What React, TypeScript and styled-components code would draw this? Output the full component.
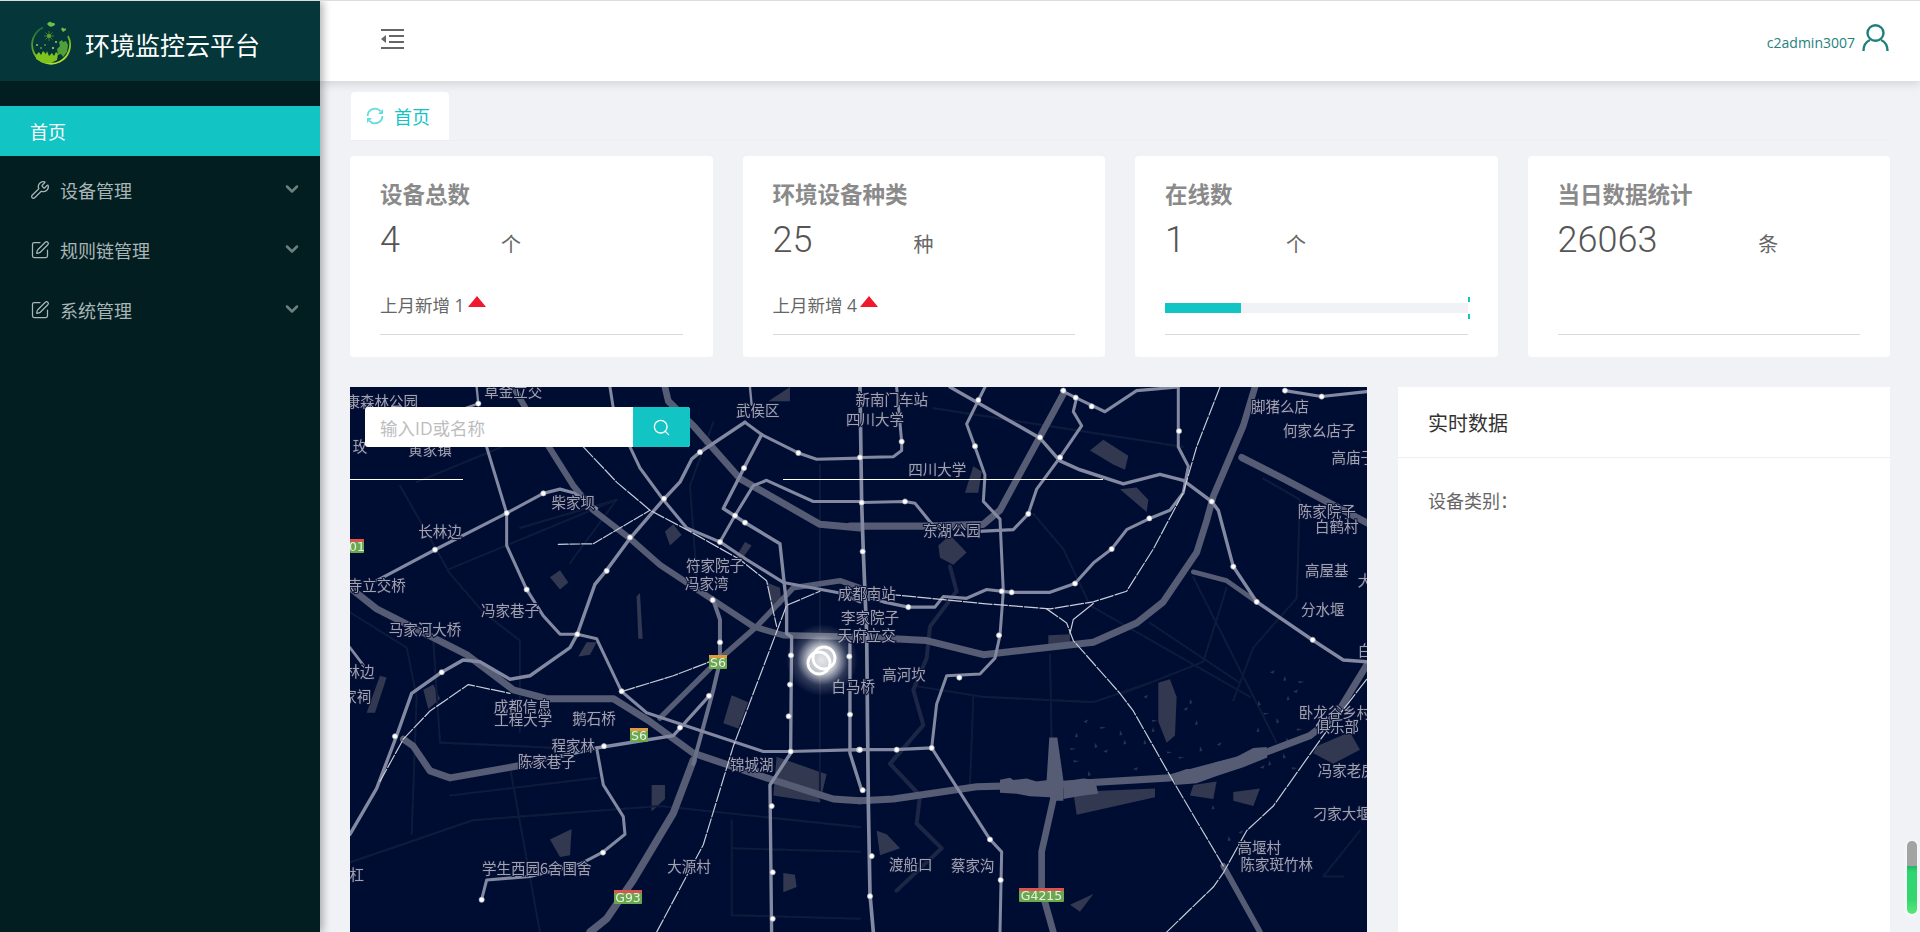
import * as React from 'react';
import styled, { createGlobalStyle } from 'styled-components';
import { ChevronDown, Search, SquarePen, Wrench } from 'lucide-react';

const GlobalStyle = createGlobalStyle`
    html, body {
        margin: 0;
        height: 932px;
        overflow: hidden;
        background: #f0f2f5;
        font-family: "Open Sans", "Noto Sans CJK SC", sans-serif;
    }
    * { box-sizing: border-box; }
`;

const Page = styled.div`
    display: flex;
    height: 932px;
    border-top: 1px solid #dcdcdc;
    overflow: hidden;
`;

const Sidebar = styled.aside`
    width: 320px;
    flex-shrink: 0;
    background: #031e21;
    box-shadow: 3px 0 8px rgba(0, 0, 0, 0.3);
    position: relative;
    z-index: 2;
`;

const Brand = styled.div`
    height: 80px;
    background: #04363a;
    display: flex;
    align-items: center;
    gap: 13px;
    padding: 6px 0 0 28px;
`;

const BrandName = styled.div`
    color: #fff;
    font-size: 25px;
    line-height: 30px;
    margin-top: 2px;
`;

const Menu = styled.nav`
    padding-top: 25px;
`;

const MenuItem = styled.div<{ $active?: boolean }>`
    display: flex;
    align-items: center;
    height: ${(props) => (props.$active ? '50px' : '60px')};
    padding: ${(props) => (props.$active ? '0 18px 0 30px' : '0 18px 2px 30px')};
    background: ${(props) => (props.$active ? '#13c4c5' : 'transparent')};
    color: ${(props) => (props.$active ? '#fff' : '#a9b6b6')};
    font-size: 18px;
    margin-bottom: ${(props) => (props.$active ? '5px' : '0')};

    & > svg:first-child {
        margin-right: 10px;
    }
    & > svg:last-child {
        margin-top: -3px;
    }
`;

const MenuLabel = styled.span`
    flex: 1;
`;

const Main = styled.main`
    flex: 1;
    min-width: 0;
    display: flex;
    flex-direction: column;
`;

const Header = styled.header`
    height: 80px;
    flex-shrink: 0;
    background: #fff;
    box-shadow: 0 2px 10px rgba(0, 0, 0, 0.15);
    display: flex;
    align-items: center;
    justify-content: space-between;
    padding: 0 31px 4px 61px;
    position: relative;
    z-index: 1;
`;

const UserBox = styled.div`
    display: flex;
    align-items: center;
    gap: 7px;
    color: #23827e;
    font-size: 14px;
    margin-top: -2px;
`;

const UserName = styled.span`
    margin-top: 8px;
`;

const Content = styled.div`
    padding: 0 30px;
`;

const TabBar = styled.div`
    height: 60px;
    padding-top: 11px;
    display: flex;
    border-bottom: 1px solid #eeeff1;
`;

const Tab = styled.div`
    width: 98px;
    margin-left: 1px;
    background: #fff;
    border-radius: 4px 4px 0 0;
    display: flex;
    align-items: center;
    padding-left: 15px;
    gap: 10px;
    color: #13c4c5;
    font-size: 18px;
`;

const StatGrid = styled.section`
    display: grid;
    grid-template-columns: repeat(4, 1fr);
    gap: 30px;
    margin-top: 15px;
`;

const StatCard = styled.div`
    height: 201px;
    background: #fff;
    border-radius: 4px;
    padding: 26px 30px 0;
    display: flex;
    flex-direction: column;
`;

const StatTitle = styled.div`
    font-size: 22.5px;
    line-height: 26px;
    font-weight: 700;
    color: #8a8a8a;
`;

const StatValue = styled.div`
    display: flex;
    align-items: baseline;
    height: 50px;
    margin-top: 7px;
    color: #555;
`;

const Num = styled.span`
    font-size: 36px;
    line-height: 50px;
    font-weight: 300;
    font-family: Roboto, sans-serif;
`;

const Unit = styled.span`
    font-size: 20px;
    margin-left: 101px;
    color: #666;
`;

const StatFoot = styled.div`
    height: 41px;
    margin-top: auto;
    display: flex;
    align-items: flex-start;
    color: #666;
    font-size: 17.5px;
    line-height: 24px;
`;

const Divider = styled.div`
    height: 1px;
    background: #d9dadd;
    margin-bottom: 22px;
`;

const UpArrow = styled.span`
    width: 0;
    height: 0;
    margin: 3px 0 0 3px;
    border-left: 9px solid transparent;
    border-right: 9px solid transparent;
    border-bottom: 11px solid #f0182d;
`;

const Progress = styled.div`
    position: relative;
    width: 100%;
    height: 10px;
    margin-top: 10px;
    background: #f0f2f5;
`;

const ProgressFill = styled.div`
    height: 100%;
    background: #13c4c5;
`;

const ProgressTick = styled.i<{ $top: number }>`
    position: absolute;
    right: -2px;
    top: ${(props) => props.$top}px;
    width: 2px;
    height: 5px;
    background: #13c4c5;
`;

const LowerRow = styled.section`
    display: flex;
    gap: 31px;
    margin-top: 30px;
    height: 545px;
`;

const MapPanel = styled.div`
    position: relative;
    flex: 1;
    background: #000d33;
    overflow: hidden;
`;

const MapSvg = styled.svg`
    display: block;
`;

const SearchBox = styled.div`
    position: absolute;
    left: 15px;
    top: 20px;
    width: 325px;
    height: 40px;
    display: flex;
    background: #fff;
    border-radius: 3px;
    overflow: hidden;
`;

const SearchInput = styled.div`
    flex: 1;
    padding-left: 15px;
    line-height: 42px;
    color: #bdbdbd;
    font-size: 17.5px;
`;

const SearchButton = styled.div`
    width: 57px;
    background: #13c4c5;
    color: #fff;
    display: flex;
    align-items: center;
    justify-content: center;
`;

const WhiteLine = styled.div<{ $left: number; $width: number }>`
    position: absolute;
    top: 92px;
    left: ${(props) => props.$left}px;
    width: ${(props) => props.$width}px;
    height: 1px;
    background: #fff;
`;

const DataPanel = styled.div`
    width: 492px;
    background: #fff;
`;

const DataHeader = styled.div`
    height: 71px;
    padding: 0 30px;
    display: flex;
    align-items: center;
    color: #333;
    font-size: 20px;
    border-bottom: 1px solid #eeeff1;
`;

const DataBody = styled.div`
    padding: 31px 30px;
    color: #666;
    font-size: 18px;
    line-height: 24px;
`;

const ScrollWidget = styled.div`
    position: fixed;
    left: 1907px;
    top: 841px;
    width: 10px;
    height: 73px;
    border-radius: 5px;
    background: linear-gradient(#a3a3a3 0, #a3a3a3 34%, #25b55f 34%, #2ed573 42%, #36d66f 80%, #58e67c 100%);
    box-shadow: 0 2px 6px rgba(255, 255, 255, 0.9);
    z-index: 5;
`;

const Logo = () => (
    <svg width="44" height="46" viewBox="0 0 44 46">
        <defs>
            <linearGradient id="logoRing" x1="0.2" y1="0" x2="0.6" y2="1">
                <stop offset="0" stopColor="#1d6b3a" />
                <stop offset="0.55" stopColor="#6fb525" />
                <stop offset="1" stopColor="#b5dc2e" />
            </linearGradient>
        </defs>
        <path d="M15 6.5 A19 19 0 1 0 40 15" fill="none" stroke="url(#logoRing)" strokeWidth="1.8" />
        <path d="M8 34 l3-3 2 3 2-4 3 3 1-3 2 5 3-3 2 3 2-4 2 2 -1 6 -6 3 -8 0 -7-4z" fill="#7fc31f" />
        <path d="M31 21 l3-2 1 2 3-1 2 4 -1 7 -4 5 -2-3 -3 1 -1-6 3-3z" fill="#4f9f3a" />
        <circle cx="21" cy="15" r="1.8" fill="#8fcf2d" />
        <path d="M21 10v10M16 15h10M17.5 11.5l7 7M24.5 11.5l-7 7" stroke="#5c9c28" strokeWidth="0.7" />
        <path d="M19 3 q3-4 5-1 q3-1 3 2 q-4 3-6 1z" fill="#6cc04a" />
        <path d="M33 8 q2-3 3 0 q2-2 2 1 l-3 2z" fill="#6cc04a" />
        <circle cx="9" cy="24" r="1" fill="#8fcf2d" />
        <circle cx="13" cy="27" r="0.8" fill="#a5d93a" />
        <circle cx="28" cy="21" r="1" fill="#a5d93a" />
        <circle cx="25" cy="27" r="1" fill="#c4e35a" />
        <circle cx="17" cy="24" r="0.7" fill="#c4e35a" />
    </svg>
);

const CollapseIcon = () => (
    <svg width="23" height="20" viewBox="0 0 23 20" fill="#666">
        <rect x="0" y="0" width="23" height="2" />
        <rect x="8" y="6" width="15" height="2" />
        <rect x="8" y="12" width="15" height="2" />
        <rect x="0" y="18" width="23" height="2" />
        <path d="M5 6v8L0 10z" />
    </svg>
);

const RefreshIcon = () => (
    <svg width="18" height="18" viewBox="0 0 18 18" fill="none" stroke="#62dcdc" strokeWidth="1.8">
        <path d="M1.6 9 A7.4 7.4 0 0 1 14.5 4.2" />
        <path d="M16.4 9 A7.4 7.4 0 0 1 3.5 13.8" />
        <path d="M17 2v5h-5z" fill="#62dcdc" stroke="none" />
        <path d="M1 16v-5h5z" fill="#62dcdc" stroke="none" />
    </svg>
);

const UserIcon = () => (
    <svg width="27" height="28" viewBox="0 0 27 28" fill="none" stroke="#1f7f7b" strokeWidth="2.4">
        <ellipse cx="13.5" cy="9" rx="8" ry="7.8" />
        <path d="M8 16 C3.5 18 1.5 22 1.5 27 M19 16 C23.5 18 25.5 22 25.5 27" />
    </svg>
);

// map geometry, traced in crop pixels: x = 340 + u / 3, y = 380 + v / 2.84
type Line = { p: string; w: number; c: string; dash?: string };

const MAJOR = '#555b73';
const LIGHT = '#8389a0';
const RAIL = '#c9ccd6';
const DIM = '#111a3a';

const WEST_DIM: string[] = [
    '30,1370 400,1250 960,1210 1560,1270',
    '180,300 330,550 430,660 540,740 540,1000',
    '230,290 590,150',
    '320,540 830,340',
    '510,1100 600,1568',
    '280,740 300,1030 770,1050',
    '30,660 200,760 230,900 215,1290',
    '770,1130 330,1180',
    '1175,1250 1175,1520 1560,1530',
    '1175,1330 1560,1340',
    '1440,240 1440,1190',
    '1070,560 1050,300 1120,120',
    '540,420 830,340 690,520',
];

const EAST_DIM: string[] = [
    '250,80 1000,190',
    '550,380 640,480 720,640 1200,900',
    '1030,560 1280,1030',
    '900,690 1170,860',
    '820,890 1060,800 1130,590',
    '600,780 605,1020',
    '200,870 400,900 730,915 900,860',
    '370,900 360,1150',
    '1480,1410 1420,1410 1530,1280',
    '1240,280 1350,340 1340,620 1210,760 1150,910',
];

const WEST_ROADS: Line[] = [
    { p: '975,20 985,60 1060,130 1200,280 1440,410 1560,420', w: 20, c: MAJOR },
    { p: '520,20 600,150 700,300 760,370 870,450 960,525 1120,625 1240,700 1330,725 1560,730', w: 18, c: MAJOR },
    { p: '30,590 110,650 380,780 520,880 620,905 820,905 930,970 1060,1060 1280,1130 1480,1190 1560,1195', w: 20, c: MAJOR },
    { p: '1060,1080 1000,1230 880,1420 800,1530 750,1568', w: 22, c: MAJOR },
    { p: '960,960 1130,800 1250,700 1360,590 1500,570 1560,590', w: 16, c: MAJOR },
    { p: '1060,1090 1120,880 1140,800 1140,680 1118,620', w: 12, c: '#6a7088' },
    { p: '190,1020 220,1040 270,1110 330,1130 540,1095', w: 20, c: MAJOR },
    { p: '540,1095 770,1045 900,1025 1000,1010 1105,900', w: 10, c: LIGHT },
    { p: '30,1290 110,1160 170,1010 215,890 305,830 370,795 420,800 510,850 570,840 690,760 712,722 765,580 800,540 870,450 970,340 1020,290 1055,225 1080,205 1215,120', w: 10, c: LIGHT },
    { p: '110,570 285,482 500,378 610,322 660,310 700,320 770,365', w: 9, c: LIGHT },
    { p: '440,190 500,378 500,470 560,595 610,670 660,722 712,722 770,735 845,885 920,945 1270,1055 1350,1055 1560,1050', w: 9, c: LIGHT },
    { p: '870,190 900,250 970,340 1040,420 1140,460 1220,510 1330,575 1500,605 1560,630', w: 9, c: LIGHT },
    { p: '1265,155 1212,250 1150,365 1215,405 1320,465 1340,640 1340,720 1355,730 1352,1060 1290,1150 1295,1568', w: 10, c: LIGHT },
    { p: '1140,460 1185,385 1240,300 1280,285 1420,345 1560,345', w: 9, c: LIGHT },
    { p: '1215,120 1265,155 1375,207 1430,225 1560,222', w: 9, c: LIGHT },
    { p: '770,1045 790,1150 850,1240 855,1290 790,1340 720,1375 570,1410 440,1420 425,1475', w: 9, c: LIGHT },
    { p: '1530,750 1530,1060 1565,1165', w: 10, c: LIGHT },
    { p: '410,20 415,67 360,85', w: 7, c: LIGHT },
    { p: '1230,20 1235,70', w: 7, c: LIGHT },
    { p: '810,20 820,80', w: 9, c: LIGHT },
    { p: '30,760 70,810', w: 8, c: LIGHT },
    { p: '845,885 1000,840 1110,800', w: 3.5, c: RAIL, dash: '40 5' },
    { p: '120,1140 190,1020 270,940 385,865 510,890', w: 3.5, c: RAIL, dash: '40 6' },
    { p: '950,1568 1090,1320 1180,1040 1300,740 1340,640 1440,600', w: 3.5, c: RAIL, dash: '40 6' },
    { p: '730,190 830,290 930,370 1050,430 1200,510 1280,570 1310,700', w: 3.5, c: RAIL, dash: '40 6' },
    { p: '655,467 760,465 930,370', w: 3.5, c: RAIL, dash: '30 5' },
];

const EAST_ROADS: Line[] = [
    { p: '0,415 230,415 400,410 450,370 640,40', w: 20, c: MAJOR },
    { p: '30,730 130,735 230,740 400,780 730,745 860,690 940,630 1040,490 1070,400 1090,330 1180,130 1215,20', w: 20, c: MAJOR },
    { p: '30,1195 130,1190 380,1155 600,1150 960,1130 1240,1060 1380,1010 1460,950 1550,810', w: 20, c: MAJOR },
    { p: '615,1170 575,1340 575,1450 610,1568', w: 20, c: MAJOR },
    { p: '1175,220 1300,280 1560,410', w: 20, c: MAJOR },
    { p: '1030,545 1130,570 1220,630', w: 14, c: MAJOR },
    { p: '1120,1380 1230,1568', w: 17, c: MAJOR },
    { p: '300,20 570,165 630,230 690,255 820,295 930,268 1000,285 1085,345 1105,370 1150,530 1220,630 1390,740 1480,795 1550,800', w: 10, c: LIGHT },
    { p: '405,20 350,125 375,190 405,270 400,345 450,395 460,600 450,725 435,790 390,835 290,840 260,920 245,1045 135,1050 0,1050', w: 9, c: LIGHT },
    { p: '245,1045 420,1305 455,1340 450,1568', w: 9, c: LIGHT },
    { p: '635,30 677,50 765,90 860,30 985,20', w: 9, c: LIGHT },
    { p: '680,50 670,90 695,130 630,220 560,310 535,380 490,425 385,430', w: 9, c: LIGHT },
    { p: '985,20 985,190 1015,245 1000,320 960,370 895,395 830,425 785,480 730,520 675,578 600,603 485,603 410,595 350,620 280,615 255,645 175,645 100,630 0,600', w: 9, c: LIGHT },
    { p: '30,20 35,350 40,490 50,720 55,1200 60,1460 70,1568', w: 11, c: LIGHT },
    { p: '1305,30 1415,47 1550,33', w: 9, c: LIGHT },
    { p: '140,20 155,175 155,200 130,218 30,220', w: 9, c: LIGHT },
    { p: '35,348 165,345 195,350 255,420', w: 9, c: LIGHT },
    { p: '1110,20 1040,190 1000,320 910,480 830,600 730,630 600,650 400,635 130,610', w: 3.5, c: RAIL, dash: '40 6' },
    { p: '590,650 650,690 670,740 810,890 850,940 970,1140 1120,1380', w: 3.5, c: RAIL, dash: '40 6' },
    { p: '730,635 670,680 660,720', w: 3.5, c: RAIL },
    { p: '1550,850 1420,1010 1270,1210 1190,1280 1120,1400 1090,1440 950,1568', w: 3.5, c: RAIL, dash: '50 6' },
];

const WEST_PATCHES: string[] = [
    '630,560 660,540 685,575 660,595',
    '890,615 900,605 908,735 895,735',
    '975,430 1000,410 1025,440 990,470',
    '715,785 740,745 770,745 750,780',
    '250,880 280,865 300,905 265,935',
    '80,945 120,840 140,845 105,945',
    '1150,975 1175,895 1225,915 1195,990',
    '1310,1070 1460,1120 1440,1200 1300,1180',
    '630,1305 695,1275 690,1350 660,1355',
    '935,1150 975,1150 975,1190 935,1225',
    '1330,1400 1365,1405 1370,1440 1330,1455',
    '1280,575 1320,590 1325,640 1295,650',
    '1285,60 1350,20 1350,60',
    '1190,500 1215,460 1235,470 1205,510',
];

const EAST_PATCHES: string[] = [
    '720,200 760,170 835,215 825,255 790,240',
    '345,320 370,245 395,260 385,320',
    '810,310 860,305 895,340 890,375',
    '265,470 300,440 350,490 310,525 270,505',
    '925,860 960,850 980,900 975,1010 950,1030 925,970',
    '670,1170 915,1160 915,1185 680,1235',
    '1030,1150 1100,1140 1090,1190 1020,1180',
    '1150,1170 1230,1160 1210,1210 1150,1195',
    '80,1280 110,1290 150,1330 90,1350',
    '1400,1040 1500,1000 1530,1050 1450,1090 1390,1060',
    '660,1490 730,1460 690,1510',
    '595,725 660,722 660,750 595,752',
];

const ELEVATED = '#555b73';
const ELEVATED_PARTS: string[] = [
    '598,1015 622,1015 640,1135 640,1195 602,1195 590,1135',
    '450,1135 480,1130 490,1136 530,1132 560,1140 600,1135 600,1185 540,1182 500,1175 450,1172',
    '640,1140 700,1132 735,1135 745,1175 700,1180 640,1190',
    '970,1118 1010,1105 1050,1105 1100,1085 1150,1075 1210,1045 1250,1042 1252,1072 1180,1100 1100,1125 1040,1145 975,1150',
];

const EAST_SPECKS: Array<[number, number]> = [
    [700, 970], [675, 1015], [750, 985], [810, 995], [760, 1055], [820, 1035], [670, 1080], [715, 1110], [850, 1105],
    [880, 1035], [905, 965], [1020, 905], [1000, 935], [1035, 980], [950, 1055], [1050, 1040], [1100, 1035], [1220, 1000],
    [1240, 945], [1225, 910], [1260, 830], [1300, 855], [1345, 855], [1280, 960], [1330, 885], [1310, 910], [1340, 990],
    [1310, 1015], [1230, 1100], [1255, 1095], [1325, 1100], [1135, 1295], [1165, 1285], [1085, 1220],
    [660, 1045], [735, 1030], [880, 900], [905, 1000], [985, 1070], [1300, 1060],
];

const SPECK_SHAPES = ['l14-6 -4 10z', 'l4-14 5 12z', 'l18 2 -16 4z', 'l8 12 -9 3z'];

const RIVER = '300,530 320,600 240,700 230,790 190,880 220,980 120,1090 210,1180 200,1260 275,1330 140,1450';

const WEST_DOTS: Array<[number, number]> = [
    [415, 67], [1080, 205], [1212, 250], [1375, 207], [610, 322], [972, 337], [500, 378], [1185, 385], [1215, 405],
    [870, 447], [1140, 460], [285, 482], [800, 542], [560, 595], [1118, 625], [712, 722], [1140, 745], [1353, 782],
    [1528, 785], [305, 830], [1350, 865], [845, 884], [1107, 897], [1346, 955], [1530, 950], [165, 1012], [1020, 987],
    [792, 1040], [1352, 1055], [1557, 1050], [1295, 1210], [789, 1342], [1298, 1398], [425, 1476], [1298, 1530],
];

const EAST_DOTS: Array<[number, number]> = [
    [640, 30], [677, 50], [725, 75], [1305, 30], [1415, 47], [385, 57], [570, 163], [155, 175], [987, 145], [375, 188],
    [630, 220], [30, 220], [35, 348], [165, 345], [1085, 345], [535, 380], [898, 393], [38, 487], [785, 480], [1150, 530],
    [675, 578], [455, 600], [485, 603], [1220, 630], [175, 645], [447, 725], [1388, 738], [328, 845], [245, 1045],
    [140, 1050], [30, 1050], [38, 1165], [420, 1305], [65, 1352], [452, 1420], [60, 1466],
];

const WEST_LABELS: Array<[string, number, number]> = [
    ['康森林公园', 125, 62], ['草金立交', 520, 33], ['武侯区', 1253, 88], ['黄家镇', 270, 200], ['玫', 60, 190],
    ['柴家坝', 700, 348], ['长林边', 300, 433], ['寺立交桥', 110, 585], ['冯家巷子', 510, 655], ['马家河大桥', 255, 710],
    ['符家院子', 1125, 527], ['冯家湾', 1100, 578], ['林边', 60, 828], ['家祠', 50, 900], ['成都信息', 548, 928],
    ['工程大学', 550, 966], ['鹅石桥', 762, 962], ['程家林', 700, 1040], ['陈家巷子', 620, 1085], ['锦城湖', 1235, 1092],
    ['学生西园6舍国舍', 590, 1390], ['大源村', 1047, 1382], ['杠', 50, 1405],
];

const EAST_LABELS: Array<[string, number, number]> = [
    ['白马桥', 10, 872], ['天府立交', 50, 728], ['李家院子', 60, 677], ['成都南站', 50, 607], ['新南门车站', 125, 57],
    ['四川大学', 75, 113], ['四川大学', 262, 257], ['东湖公园', 305, 428], ['高河坎', 162, 837], ['渡船口', 182, 1378],
    ['蔡家沟', 368, 1380], ['脚猪么店', 1290, 78], ['何家幺店子', 1408, 145], ['高庙子', 1510, 222], ['陈家院子', 1430, 375],
    ['白鹤村', 1460, 418], ['高屋基', 1430, 543], ['分水堰', 1418, 652], ['卧龙谷乡村', 1455, 945], ['俱乐部', 1462, 985],
    ['冯家老房', 1490, 1110], ['刁家大堰', 1475, 1232], ['高堰村', 1228, 1328], ['陈家斑竹林', 1280, 1378], ['白', 1545, 770],
    ['大', 1545, 570],
];

const SHIELDS: Array<{ text: string; x: number; y: number; w: number; top: string }> = [
    { text: 'S6', x: 709, y: 655, w: 18, top: '#e09a3a' },
    { text: 'S6', x: 630, y: 728, w: 18, top: '#e09a3a' },
    { text: '01', x: 350, y: 539, w: 14, top: '#d9534f' },
    { text: 'G93', x: 614, y: 890, w: 28, top: '#d9534f' },
    { text: 'G4215', x: 1019, y: 888, w: 45, top: '#d9534f' },
];

const pageX = (u: number, east: boolean) => (east ? 850 : 340) + u / 3;
const pageY = (v: number) => 380 + v / 2.84;

function RoadGroup({ east, dim, roads, patches }: { east: boolean; dim: string[]; roads: Line[]; patches: string[] }) {
    return (
        <g transform={`translate(${east ? 850 : 340} 380) scale(0.3333 0.3521)`} fill="none" strokeLinejoin="round" strokeLinecap="round">
            {patches.map((p, i) => <polygon key={i} points={p} fill="#31384f" />)}
            {dim.map((p, i) => <polyline key={i} points={p} stroke={DIM} strokeWidth={6} />)}
            {east && <polyline points={RIVER} stroke="#1e2545" strokeWidth={12} />}
            {east && EAST_SPECKS.map(([x, y], i) => (
                <path key={i} d={`M${x} ${y} ${SPECK_SHAPES[i % SPECK_SHAPES.length]}`} fill="#2b3250" />
            ))}
            {roads.map((r, i) => (
                <polyline key={i} points={r.p} stroke={r.c} strokeWidth={r.w} strokeDasharray={r.dash} />
            ))}
            {east && ELEVATED_PARTS.map((p, i) => <polygon key={i} points={p} fill={ELEVATED} />)}
        </g>
    );
}

function CityMap() {
    return (
        <MapSvg width="1017" height="545" viewBox="350 387 1017 545">
            <defs>
                <filter id="soft"><feGaussianBlur stdDeviation="0.5" /></filter>
                <radialGradient id="glow">
                    <stop offset="0" stopColor="#fff" stopOpacity="0.9" />
                    <stop offset="0.38" stopColor="#fff" stopOpacity="0.75" />
                    <stop offset="0.7" stopColor="#fff" stopOpacity="0.18" />
                    <stop offset="1" stopColor="#fff" stopOpacity="0" />
                </radialGradient>
            </defs>
            <rect x="350" y="387" width="1017" height="545" fill="#000d33" />
            <g filter="url(#soft)">
                <RoadGroup east={false} dim={WEST_DIM} roads={WEST_ROADS} patches={WEST_PATCHES} />
                <RoadGroup east dim={EAST_DIM} roads={EAST_ROADS} patches={EAST_PATCHES} />
                {WEST_DOTS.map(([u, v], i) => (
                    <circle key={i} cx={pageX(u, false)} cy={pageY(v)} r={2.6} fill="#fff" stroke="#a5a9b8" strokeWidth={0.7} />
                ))}
                {EAST_DOTS.map(([u, v], i) => (
                    <circle key={i} cx={pageX(u, true)} cy={pageY(v)} r={2.6} fill="#fff" stroke="#a5a9b8" strokeWidth={0.7} />
                ))}
                {SHIELDS.map((s) => (
                    <g key={s.text + s.x}>
                        <rect x={s.x} y={s.y} width={s.w} height={14} rx={1} fill="#6aa84f" />
                        <rect x={s.x} y={s.y} width={s.w} height={3} fill={s.top} />
                        <text x={s.x + s.w / 2} y={s.y + 12} textAnchor="middle" fontSize="12.5" fill="#e8efe0" fontFamily="'DejaVu Sans', sans-serif">{s.text}</text>
                    </g>
                ))}
                <g fontFamily="'Noto Sans CJK SC', sans-serif" fontSize="14.5" fill="#a0a3b3" stroke="#0a1236" strokeWidth="2" textAnchor="middle" style={{ paintOrder: 'stroke' }}>
                    {WEST_LABELS.map(([t, u, v], i) => <text key={i} x={pageX(u, false)} y={pageY(v) + 5}>{t}</text>)}
                    {EAST_LABELS.map(([t, u, v], i) => <text key={i} x={pageX(u, true)} y={pageY(v) + 5}>{t}</text>)}
                </g>
            </g>
            <circle cx="822" cy="660" r="36" fill="url(#glow)" />
            <circle cx="824" cy="658" r="11" fill="none" stroke="#fff" strokeWidth="2.8" />
            <circle cx="819" cy="663" r="11" fill="none" stroke="#fff" strokeWidth="2.8" />
        </MapSvg>
    );
}

const STATS = [
    { title: '设备总数', value: '4', unit: '个', foot: '上月新增 1' },
    { title: '环境设备种类', value: '25', unit: '种', foot: '上月新增 4' },
    { title: '在线数', value: '1', unit: '个', progress: 25 },
    { title: '当日数据统计', value: '26063', unit: '条' },
];

export default function App(): JSX.Element {
    return (
        <Page>
            <GlobalStyle />
            <Sidebar>
                <Brand>
                    <Logo />
                    <BrandName>环境监控云平台</BrandName>
                </Brand>
                <Menu>
                    <MenuItem $active>首页</MenuItem>
                    <MenuItem>
                        <Wrench size={20} strokeWidth={1.5} />
                        <MenuLabel>设备管理</MenuLabel>
                        <ChevronDown size={20} color="#6d8080" strokeWidth={3} />
                    </MenuItem>
                    <MenuItem>
                        <SquarePen size={20} strokeWidth={1.5} />
                        <MenuLabel>规则链管理</MenuLabel>
                        <ChevronDown size={20} color="#6d8080" strokeWidth={3} />
                    </MenuItem>
                    <MenuItem>
                        <SquarePen size={20} strokeWidth={1.5} />
                        <MenuLabel>系统管理</MenuLabel>
                        <ChevronDown size={20} color="#6d8080" strokeWidth={3} />
                    </MenuItem>
                </Menu>
            </Sidebar>
            <Main>
                <Header>
                    <CollapseIcon />
                    <UserBox>
                        <UserName>c2admin3007</UserName>
                        <UserIcon />
                    </UserBox>
                </Header>
                <Content>
                    <TabBar>
                        <Tab>
                            <RefreshIcon />
                            首页
                        </Tab>
                    </TabBar>
                    <StatGrid>
                        {STATS.map((stat) => (
                            <StatCard key={stat.title}>
                                <StatTitle>{stat.title}</StatTitle>
                                <StatValue>
                                    <Num>{stat.value}</Num>
                                    <Unit>{stat.unit}</Unit>
                                </StatValue>
                                <StatFoot>
                                    {stat.foot && (
                                        <>
                                            {stat.foot}
                                            <UpArrow />
                                        </>
                                    )}
                                    {stat.progress && (
                                        <Progress>
                                            <ProgressFill style={{ width: `${stat.progress}%` }} />
                                            <ProgressTick $top={-6} />
                                            <ProgressTick $top={11} />
                                        </Progress>
                                    )}
                                </StatFoot>
                                <Divider />
                            </StatCard>
                        ))}
                    </StatGrid>
                    <LowerRow>
                        <MapPanel>
                            <CityMap />
                            <SearchBox>
                                <SearchInput>输入ID或名称</SearchInput>
                                <SearchButton>
                                    <Search size={19} strokeWidth={1.7} />
                                </SearchButton>
                            </SearchBox>
                            <WhiteLine $left={0} $width={113} />
                            <WhiteLine $left={433} $width={320} />
                        </MapPanel>
                        <DataPanel>
                            <DataHeader>实时数据</DataHeader>
                            <DataBody>设备类别：</DataBody>
                        </DataPanel>
                    </LowerRow>
                </Content>
            </Main>
            <ScrollWidget />
        </Page>
    );
}
